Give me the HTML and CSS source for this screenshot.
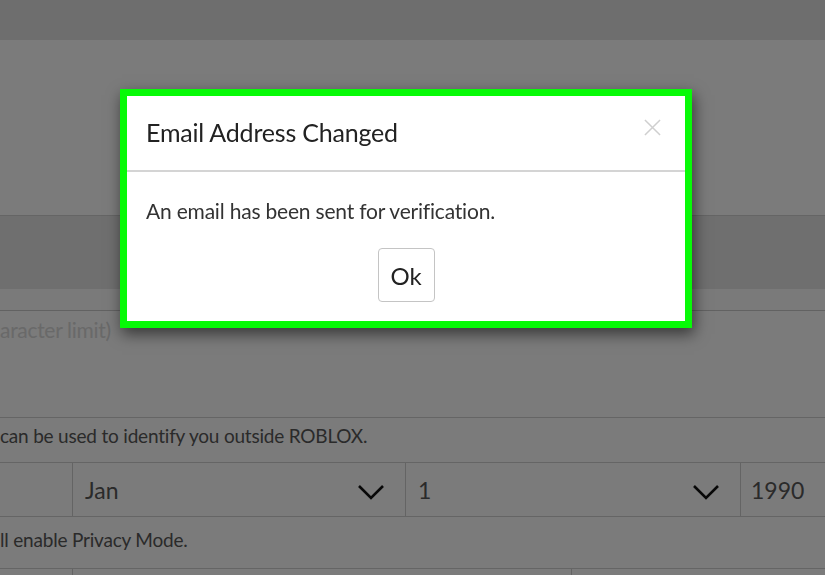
FILE: index.html
```html
<!DOCTYPE html>
<html lang="en">
<head>
<meta charset="utf-8">
<title>Email Address Changed</title>
<link rel="stylesheet" href="styles.css">
</head>
<body>
<div class="page">
  <div class="topbar"></div>
  <div class="section"></div>
  <div class="band"></div>
  <div class="spacer"></div>
  <div class="textarea"><span class="placeholder">aracter limit)</span></div>
  <div class="note">can be used to identify you outside ROBLOX.</div>
  <div class="selects">
    <div class="cell"></div>
    <div class="cell select"><span>Jan</span><svg class="chev" viewBox="0 0 28 16"><path d="M2 2 L14 14 L26 2" fill="none" stroke="#111" stroke-width="2.6"/></svg></div>
    <div class="cell select"><span>1</span><svg class="chev" viewBox="0 0 28 16"><path d="M2 2 L14 14 L26 2" fill="none" stroke="#111" stroke-width="2.6"/></svg></div>
    <div class="cell select"><span>1990</span></div>
  </div>
  <div class="note note2">ll enable Privacy Mode.</div>
  <div class="bottomrow">
    <div class="cell"></div>
    <div class="cell"></div>
    <div class="cell"></div>
  </div>
</div>
<div class="overlay"></div>
<div class="modal">
  <div class="modal-header">
    <h4 class="modal-title">Email Address Changed</h4>
    <svg class="close" viewBox="0 0 18 18" aria-label="Close"><path d="M1 1 L17 17 M17 1 L1 17" fill="none" stroke="#cfcfcf" stroke-width="1.6"/></svg>
  </div>
  <div class="modal-body">
    <p class="message">An email has been sent for verification.</p>
    <button class="btn">Ok</button>
  </div>
</div>
</body>
</html>
```
FILE: styles.css
```css
html, body {
  margin: 0;
  padding: 0;
  width: 825px;
  height: 575px;
  overflow: hidden;
  font-family: Lato, "Open Sans", "Liberation Sans", sans-serif;
}
.page {
  background: #f6f6f6;
  height: 575px;
  display: flex;
  flex-direction: column;
}
.topbar {
  height: 40px;
  background: #dcdcdc;
  flex: none;
}
.section {
  height: 175px;
  background: #f6f6f6;
  flex: none;
}
.band {
  height: 73px;
  background: #dedede;
  border-top: 1px solid #cacaca;
  flex: none;
}
.spacer {
  height: 21px;
  background: #f4f4f4;
  flex: none;
}
.textarea {
  height: 106px;
  border-top: 1px solid #c4c4c4;
  border-bottom: 1px solid #cacaca;
  flex: none;
  box-sizing: content-box;
}
.placeholder {
  display: block;
  margin-top: 6px;
  font-size: 21px;
  color: #d2d2d2;
  letter-spacing: -0.3px;
}
.note {
  height: 44px;
  line-height: 36px;
  font-size: 19px;
  color: #555;
  letter-spacing: -0.2px;
  border-bottom: 1px solid #cacaca;
  flex: none;
}
.note2 {
  height: 51px;
  line-height: 46px;
}
.selects {
  display: grid;
  grid-template-columns: 73px 333px 335px 1fr;
  height: 53px;
  border-bottom: 1px solid #cacaca;
  flex: none;
}
.cell {
  border-right: 1px solid #c8c8c8;
}
.cell:last-child {
  border-right: none;
}
.select {
  display: flex;
  align-items: center;
  justify-content: space-between;
  padding: 0 20px 0 12px;
  font-size: 23px;
  color: #555;
}
.select:last-child {
  padding-left: 10px;
}
.chev {
  width: 28px;
  height: 16px;
  margin-top: 4px;
}
.bottomrow {
  display: grid;
  grid-template-columns: 73px 499px 1fr;
  flex: 1;
}
.overlay {
  position: fixed;
  inset: 0;
  background: rgba(0, 0, 0, 0.5);
}
.modal {
  position: absolute;
  left: 120px;
  top: 89px;
  width: 558px;
  border: 7px solid #07fa07;
  background: #fff;
  box-shadow: 2px 6px 14px rgba(0, 0, 0, 0.55);
  font-family: Lato, "Open Sans", sans-serif;
}
.modal-header {
  height: 74px;
  border-bottom: 2px solid #d4d4d4;
  position: relative;
  display: flex;
  align-items: center;
  padding: 0 19px;
}
.modal-title {
  margin: 0;
  margin-top: -3px;
  font-size: 25px;
  font-weight: 400;
  color: #222;
  letter-spacing: -0.2px;
}
.close {
  position: absolute;
  right: 24px;
  top: 23px;
  width: 17px;
  height: 17px;
}
.modal-body {
  padding: 26px 19px 19px;
  display: flex;
  flex-direction: column;
  align-items: center;
}
.message {
  align-self: stretch;
  margin: 0 0 25px;
  font-size: 21px;
  color: #333;
  letter-spacing: -0.2px;
}
.btn {
  width: 57px;
  height: 54px;
  border: 1px solid #c4c4c4;
  border-radius: 4px;
  background: #fff;
  font-family: Lato, "Open Sans", sans-serif;
  font-size: 24px;
  color: #222;
  padding: 0;
}
```
